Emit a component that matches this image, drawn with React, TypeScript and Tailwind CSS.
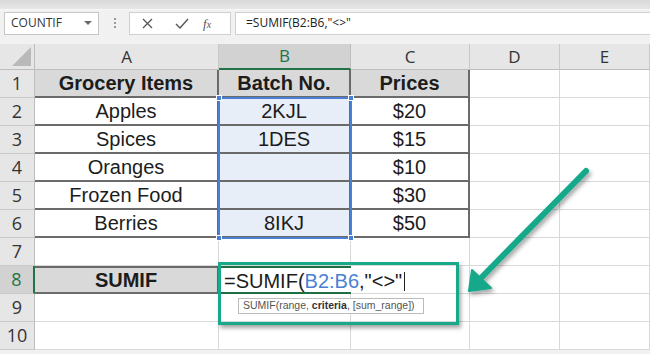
import React from "react";

const cellFont = { fontFamily: '"Liberation Sans", Arial, sans-serif' };
const uiFont = { fontFamily: '"Open Sans", "Liberation Sans", sans-serif' };

type Row = { n: number; a: string; b: string; c: string };
const rows: Row[] = [
  { n: 1, a: "Grocery Items", b: "Batch No.", c: "Prices" },
  { n: 2, a: "Apples", b: "2KJL", c: "$20" },
  { n: 3, a: "Spices", b: "1DES", c: "$15" },
  { n: 4, a: "Oranges", b: "", c: "$10" },
  { n: 5, a: "Frozen Food", b: "", c: "$30" },
  { n: 6, a: "Berries", b: "8IKJ", c: "$50" },
  { n: 7, a: "", b: "", c: "" },
  { n: 8, a: "SUMIF", b: "", c: "" },
  { n: 9, a: "", b: "", c: "" },
  { n: 10, a: "", b: "", c: "" },
];

function FormulaBar() {
  return (
    <div className="h-[44px] bg-[#f1f1f1] flex flex-col">
      <div className="h-[10px] bg-gradient-to-b from-[#d9d9d9] to-[#e6e6e6] border-b border-[#f7f7f7]" />
      <div className="flex items-center h-[24px] mt-[1px]">
        <div className="ml-[4px] w-[95px] h-[23px] bg-white border border-[#c6c6c6] flex items-center justify-between pl-[6px] pr-[6px]">
          <span className="text-[12px] text-[#333]" style={uiFont}>COUNTIF</span>
          <svg width="8" height="5" viewBox="0 0 8 5"><path d="M0 0 L8 0 L4 4 Z" fill="#6b6b6b" /></svg>
        </div>
        <div className="w-[29px] flex flex-col items-center justify-center gap-[2px] ml-[1px]">
          <div className="w-[2px] h-[2px] bg-[#9a9a9a]" />
          <div className="w-[2px] h-[2px] bg-[#9a9a9a]" />
          <div className="w-[2px] h-[2px] bg-[#9a9a9a]" />
        </div>
        <div className="w-[102px] h-[23px] bg-white border border-[#d0d0d0] flex items-center">
          <svg className="ml-[12px]" width="11" height="11" viewBox="0 0 11 11">
            <path d="M1 1 L10 10 M10 1 L1 10" stroke="#555" strokeWidth="1.3" />
          </svg>
          <svg className="ml-[22px]" width="14" height="11" viewBox="0 0 14 11">
            <path d="M1 6 L5 10 L13 1" stroke="#555" strokeWidth="1.4" fill="none" />
          </svg>
          <span className="ml-[14px] text-[13px] italic text-[#555] leading-none" style={{ fontFamily: '"Liberation Serif", serif' }}>
            f<span className="text-[10px]">x</span>
          </span>
        </div>
        <div className="ml-[4px] flex-1 h-[23px] bg-white border-y border-l border-[#d0d0d0] flex items-center pl-[10px]">
          <span className="text-[12px] text-[#222]" style={uiFont}>=SUMIF(B2:B6,"&lt;&gt;"</span>
        </div>
      </div>
    </div>
  );
}

function ColHeader({ label, active }: { label: string; active?: boolean }) {
  return (
    <div
      className={
        active
          ? "bg-[#d2d2d2] border-r border-[#bdbdbd] border-b-2 border-b-[#217346] flex items-center justify-center text-[17px] text-[#217346]"
          : "bg-[#e6e6e6] border-r border-[#c9c9c9] border-b border-b-[#bdbdbd] flex items-center justify-center text-[17px] text-[#333]"
      }
      style={uiFont}
    >
      {label}
    </div>
  );
}

export default function App() {
  return (
    <div className="w-[650px] h-[354px] bg-[#f1f1f1] overflow-hidden relative">
      <FormulaBar />
      <div className="relative grid grid-cols-[35px_184px_132px_119px_90px_90px] grid-rows-[26px_repeat(10,28px)] bg-white">
        <div className="bg-[#e6e6e6] border-r border-b border-[#bdbdbd] relative">
          <svg className="absolute right-[3px] bottom-[3px]" width="19" height="19" viewBox="0 0 19 19">
            <path d="M19 0 L19 19 L0 19 Z" fill="#b9b9b9" />
          </svg>
        </div>
        <ColHeader label="A" />
        <ColHeader label="B" active />
        <ColHeader label="C" />
        <ColHeader label="D" />
        <ColHeader label="E" />

        {rows.map((r) => {
          const isTable = r.n <= 6;
          const isHead = r.n === 1;
          const rowHead =
            r.n === 8
              ? "bg-[#d2d2d2] border-r-2 border-r-[#217346] border-b border-b-[#c9c9c9] flex items-center justify-center text-[18px] text-[#217346]"
              : "bg-[#e6e6e6] border-r border-r-[#bdbdbd] border-b border-b-[#c9c9c9] flex items-center justify-center text-[18px] text-[#333]";
          let aCls = "border-r border-b border-[#d9d9d9]";
          let bCls = "border-r border-b border-[#d9d9d9]";
          let cCls = "border-r border-b border-[#d9d9d9]";
          if (isTable) {
            aCls = isHead
              ? "bg-[#d9d9d9] border-r-2 border-b-2 border-[#6a6a6a] font-bold"
              : "bg-white border-r-2 border-b-2 border-[#6a6a6a]";
            bCls = isHead
              ? "bg-[#d9d9d9] border-r-2 border-b-2 border-[#6a6a6a] font-bold"
              : "bg-[#e8eef8] border-r-2 border-b-2 border-[#6a6a6a]";
            cCls = isHead
              ? "bg-[#d9d9d9] border-r-2 border-b-2 border-[#6a6a6a] font-bold"
              : "bg-white border-r-2 border-b-2 border-[#6a6a6a]";
          }
          if (r.n === 8) {
            aCls = "bg-[#d9d9d9] border-r-2 border-b-2 border-t-2 border-[#6a6a6a] font-bold";
            bCls = "bg-white border-t-2 border-b-2 border-[#1e6f43] relative";
            cCls = "border-r border-b border-[#d9d9d9]";
          }
          return (
            <React.Fragment key={r.n}>
              <div className={rowHead} style={uiFont}>{r.n}</div>
              <div className={aCls + " flex items-center justify-center text-[20px] text-[#1c1c1c]"} style={cellFont}>{r.a}</div>
              <div className={bCls + " flex items-center justify-center text-[20px] text-[#1c1c1c]"} style={cellFont}>
                {r.n === 8 ? (
                  <div className="absolute left-[5px] top-[1px] whitespace-nowrap text-[20px] leading-[24px] text-[#1c1c1c] z-10 flex items-center">
                    <span>=SUMIF(</span>
                    <span className="text-[#4a7fd6]">B2:B6</span>
                    <span>,"&lt;&gt;"</span>
                    <span className="ml-[2px] w-[1px] h-[19px] bg-[#222]" />
                  </div>
                ) : (
                  r.b
                )}
              </div>
              <div className={cCls + " flex items-center justify-center text-[20px] text-[#1c1c1c]"} style={cellFont}>{r.c}</div>
              <div className="border-r border-b border-[#d9d9d9]" />
              <div className="border-r border-b border-[#d9d9d9]" />
            </React.Fragment>
          );
        })}

        <div className="absolute left-[218px] top-[53px] w-[134px] h-[142px] border-2 border-[#4a7fd6] pointer-events-none">
          <div className="absolute -left-[4px] -top-[4px] w-[6px] h-[6px] bg-[#4a7fd6] border border-white" />
          <div className="absolute -right-[4px] -top-[4px] w-[6px] h-[6px] bg-[#4a7fd6] border border-white" />
          <div className="absolute -left-[4px] -bottom-[4px] w-[6px] h-[6px] bg-[#4a7fd6] border border-white" />
          <div className="absolute -right-[4px] -bottom-[4px] w-[6px] h-[6px] bg-[#4a7fd6] border border-white" />
        </div>

        <div
          className="absolute left-[238px] top-[254px] w-[186px] h-[16px] bg-white border border-[#bcbcbc] flex items-center pl-[4px] text-[10.5px] text-[#555] whitespace-nowrap z-20"
          style={cellFont}
        >
          <span>SUMIF(range,&nbsp;</span>
          <span className="font-bold text-[#333]">criteria</span>
          <span>, [sum_range])</span>
        </div>

        <div className="absolute left-[218px] top-[218px] w-[241px] h-[63px] border-[3px] border-[#18a88a] shadow-[2px_3px_4px_rgba(0,0,0,0.35)] z-20 pointer-events-none" />
      </div>

      <svg className="absolute left-0 top-0 z-30" width="650" height="354" viewBox="0 0 650 354">
        <defs>
          <filter id="sh" x="-20%" y="-20%" width="140%" height="140%">
            <feDropShadow dx="2" dy="3" stdDeviation="2" floodColor="#000" floodOpacity="0.35" />
          </filter>
        </defs>
        <g filter="url(#sh)">
          <line x1="586" y1="171" x2="480" y2="279" stroke="#18a88a" strokeWidth="6" strokeLinecap="round" />
          <path d="M469 291 L472 270 L491 288 Z" fill="#18a88a" stroke="#18a88a" strokeWidth="2" strokeLinejoin="round" />
        </g>
      </svg>
    </div>
  );
}
